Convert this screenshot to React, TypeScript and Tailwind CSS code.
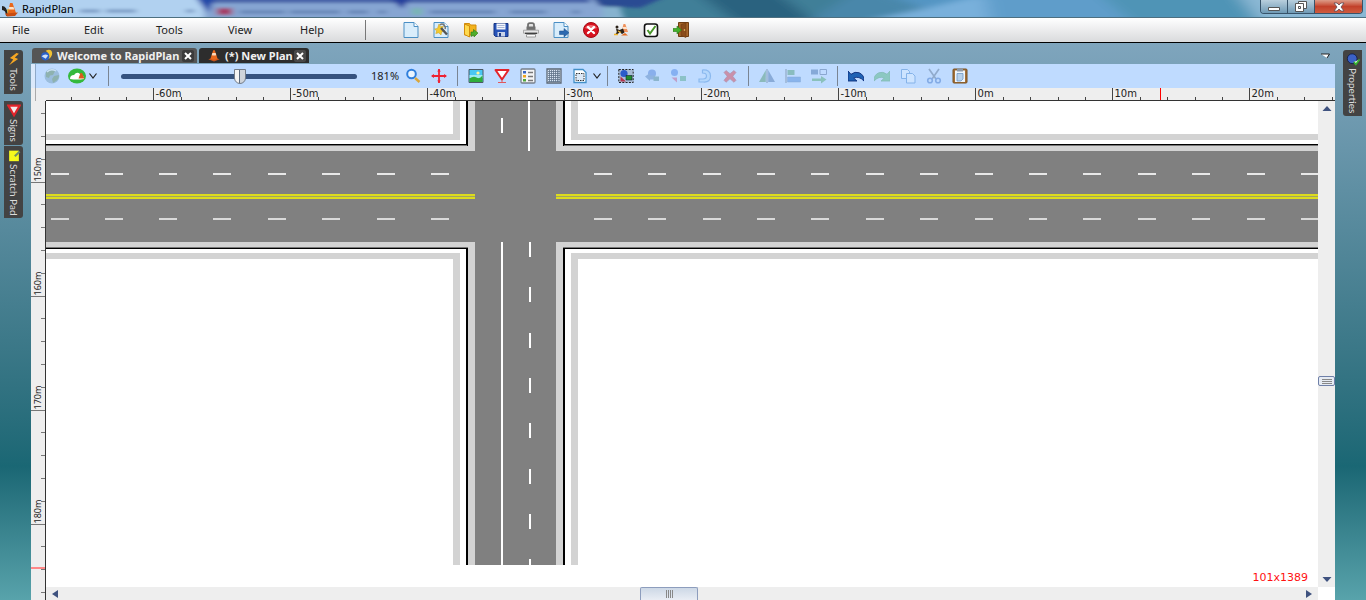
import { useState } from "react";
import type { ReactNode } from "react";

// ---------- small icons ----------

function Icon({ children, className = "h-4 w-4" }: { children: ReactNode; className?: string }) {
  return (
    <svg viewBox="0 0 16 16" className={`${className} shrink-0`} fill="none" aria-hidden="true">
      {children}
    </svg>
  );
}

const cone = (
  <>
    <path d="M1 12.5 8 10.5l7 2L8 15.5z" fill="#c8541a" />
    <path d="M7 1.5h2l3.400 10.600Q8 14.400 3.600 12.100z" fill="#e8671c" />
    <path d="M6 5h4l.8 2.600Q8 8.600 5.200 7.600z" fill="#fbd9bd" />
  </>
);

const newDoc = (
  <>
    <path d="M1 .5h10l4 4v11H1z" fill="#d9edfb" stroke="#4a8fc4" />
    <path d="M11 .5v4h4" fill="#fff" stroke="#4a8fc4" />
  </>
);

const menuIcons: { label: string; art: ReactNode }[] = [
  { label: "New", art: newDoc },
  {
    label: "New from wizard",
    art: (
      <>
        {newDoc}
        <path d="m6 2 1.300 2.800 3-.6-1 2.800 2.400 2-3 .9L8 13l-2.200-2.200-3 .8.8-2.800L1.500 7l3-.6z" fill="#f3c92e" stroke="#c99a1c" strokeWidth=".5" />
        <path d="m8 6 6 6.500" stroke="#555" strokeWidth="2.400" />
        <path d="M7 3q2-2 4 0t1 4" stroke="#777" strokeWidth="1.500" />
      </>
    ),
  },
  {
    label: "Open",
    art: (
      <>
        <path d="M1.500 1.500h5l1 1.500H13v10H1.500z" fill="#f2b21c" stroke="#d28c0c" />
        <path d="m1.500 2 5 2v11l-5-2.500z" fill="#ffd94d" stroke="#d28c0c" />
        <path d="M8 14.500V10h2.500V7.500L15 11l-4 4v-2z" fill="#4fae2d" stroke="#2a7a17" strokeWidth=".6" />
      </>
    ),
  },
  {
    label: "Save",
    art: (
      <>
        <path d="M1 1.500h14v13H2.500L1 13z" fill="#2753b8" stroke="#163583" />
        <path d="M3.500 1.500h9v6h-9z" fill="#f3f6fb" />
        <path d="M4.500 3.500h7M4.500 5.500h7" stroke="#a9b7d6" />
        <path d="M4.500 10h7.500v4.500H4.500z" fill="#c9d3e8" />
        <path d="M6 11h2v3.500H6z" fill="#1d3c86" />
      </>
    ),
  },
  {
    label: "Print",
    art: (
      <>
        <path d="M5 6V3q0-1.800 1.800-1.800h2.400Q11 1.200 11 3v3" fill="#e3e3e3" stroke="#707070" strokeWidth="1.800" />
        <path d="M3.500 4.500h9V8h-9z" fill="#707070" />
        <path d="M.5 8.200h15v3H.5z" fill="#e6e6e6" stroke="#999" strokeWidth=".8" />
        <path d="M2 11.300h12" stroke="#333" strokeWidth="1.200" />
        <path d="M3.500 12.500h9V15h-9z" fill="#fafafa" stroke="#888" strokeWidth=".8" />
      </>
    ),
  },
  {
    label: "Export",
    art: (
      <>
        {newDoc}
        <path d="M6.500 9h4.500V6.500L16 10.700 11 15v-2.500H6.500z" fill="#2c69b0" stroke="#1c4a84" strokeWidth=".5" />
      </>
    ),
  },
  {
    label: "Close plan",
    art: (
      <>
        <circle cx="8" cy="8" r="7.500" fill="#d8121f" stroke="#a30b14" />
        <path d="M2 6a6.500 5 0 0 1 12 0q-6 2.500-12 0" fill="#ee6a70" />
        <path d="m5 5 6 6M11 5l-6 6" stroke="#fff" strokeWidth="2.400" strokeLinecap="round" />
      </>
    ),
  },
  {
    label: "Worksite",
    art: (
      <>
        <path d="M10.500 2h1.800l2.700 8H8.500z" fill="#f0915a" />
        <path d="M9.600 5h3.800l.8 2H9z" fill="#fde2cc" />
        <circle cx="4" cy="5" r="1.500" fill="#2a2118" />
        <path d="M3 6.500 6.500 8 10 6.500l1.500 4L9 12l-2.500-2-2 2.500L2 13l1.800-3z" fill="#2a2118" />
        <path d="M1 12.500h4M5 9l3 1.500" stroke="#f0b429" strokeWidth="1.300" />
        <path d="M8 13.500h7l-3-2.500z" fill="#e56a1e" />
      </>
    ),
  },
  {
    label: "Check plan",
    art: (
      <>
        <rect x="1.500" y="2" width="13" height="12.500" rx="2.500" fill="#fff" stroke="#111" strokeWidth="1.600" />
        <path d="m4.500 8 2.500 3.500L12.500 4" stroke="#49962a" strokeWidth="2" />
      </>
    ),
  },
  {
    label: "Exit",
    art: (
      <>
        <path d="M5.500 .5h10v14h-10z" fill="#a9672b" stroke="#6f3d13" />
        <path d="M8 2.500 13 1v14.500l-5-2z" fill="#8a4c1b" stroke="#6f3d13" strokeWidth=".6" />
        <circle cx="11.500" cy="8" r=".8" fill="#f4cf73" />
        <path d="M0 6.500h4V4l4.500 4L4 12V9.500H0z" fill="#44b02c" stroke="#257b14" strokeWidth=".6" />
      </>
    ),
  },
];

type Tool = { label: string; art: ReactNode; disabled?: boolean };

const viewTools: Tool[] = [
  {
    label: "Background image",
    art: (
      <>
        <path d="M1 1.500h14v13H1z" fill="#49c7f3" stroke="#4c5a66" />
        <path d="M1.500 7h13v3h-13z" fill="#9ceaf3" />
        <path d="M1.500 10.500q4-3 7-1t6-2V14h-13z" fill="#2fae3c" />
        <circle cx="10" cy="5" r="1.600" fill="#fff79a" />
      </>
    ),
  },
  {
    label: "Signs",
    art: (
      <>
        <path d="M1.500 2h13L8 11.500z" fill="#fff" stroke="#e3242b" strokeWidth="2" strokeLinejoin="round" />
        <path d="M8 12v2M4 14.500h8" stroke="#e0575c" />
      </>
    ),
  },
  {
    label: "Legend",
    art: (
      <>
        <rect x="1" y="1" width="14" height="14" rx="1" fill="#f4f5f7" stroke="#77808c" strokeWidth="1.300" />
        <path d="M3 3h3v2.500H3z" fill="#3a66c4" />
        <path d="M3 7h3v2.500H3z" fill="#f0a51e" />
        <path d="M3 11h3v2.500H3z" fill="#4ea53a" />
        <path d="M8 4.500h5M8 8.500h5M8 12.500h5" stroke="#777" strokeWidth="1.300" />
      </>
    ),
  },
  {
    label: "Grid",
    art: (
      <>
        <path d="M1 1h14v14H1z" fill="#dbe7f5" stroke="#5c6875" strokeWidth="1.300" />
        <path d="M3.500 2v12M5.500 2v12M7.500 2v12M9.500 2v12M11.500 2v12M13 2v12M2 3.500h12M2 5.500h12M2 7.500h12M2 9.500h12M2 11.500h12M2 13.500h12" stroke="#5f7389" strokeWidth=".8" />
      </>
    ),
  },
  {
    label: "Print area",
    art: (
      <>
        <path d="M2 1.500h9l3 3v10H2z" fill="#fff" stroke="#4390c8" strokeWidth="1.300" />
        <path d="M4 5.500h8v7H4z" fill="#dce9f7" stroke="#333" strokeDasharray="1.500 1" />
      </>
    ),
  },
];

const editTools: Tool[] = [
  {
    label: "Select",
    art: (
      <>
        <path d="M.8 1.500h14.400v13H.8z" fill="#a9bcd6" stroke="#222" strokeDasharray="2 1.300" />
        <circle cx="6" cy="5.500" r="3.600" fill="#2a5bc9" />
        <path d="M8 7.500h6V12H8z" fill="#218b2d" stroke="#123" strokeWidth=".6" />
        <path d="M2.500 8.500 8 13.500H2.500z" fill="#b3334a" />
      </>
    ),
  },
  { label: "Group", disabled: true, art: <><circle cx="8" cy="5.500" r="4" fill="#3a6ed0" /><path d="M1 8.500 6 5v2.500h5v4H6V13z" fill="#4a7ab5" /><path d="M9.500 8.500h5.500v4.500H9.500z" fill="#3f7f85" /></> },
  { label: "Ungroup", disabled: true, art: <><circle cx="4.500" cy="4.500" r="3.500" fill="#3272e0" /><path d="M10 8h6v5h-6z" fill="#3f9f74" /><path d="M1.500 9.500H7v5z" fill="#c0487a" /></> },
  { label: "Rotate", disabled: true, art: <path d="M6.500 2q8-.5 8 6t-7 6H3v-3h4q3.500 0 3.500-3T6.500 5z" fill="#a5d2f8" stroke="#3c86d6" strokeWidth="1.200" /> },
  { label: "Delete", disabled: true, art: <path d="m4 2.500 4 3.200 4-3.200 2 2L10.800 8.300l3.200 4-2 2-4-3.500-4 3.500-2-2 3.200-4L2 4.500z" fill="#d8222c" stroke="#8e2030" strokeWidth=".6" /> },
];

const arrangeTools: Tool[] = [
  { label: "Mirror", disabled: true, art: <><path d="M6.800 2v12H0z" fill="#3f8a58" /><path d="M9.200 2v12H16z" fill="#3b66a0" /><path d="M8 1v14" stroke="#345" /></> },
  { label: "Align", disabled: true, art: <><path d="M1 1v14" stroke="#345" /><path d="M2.500 2h7v5h-7z" fill="#3a8e62" /><path d="M2.500 9h13v5h-13z" fill="#3a7bd0" stroke="#35629c" strokeWidth=".5" /></> },
  { label: "Distribute", disabled: true, art: <><path d="M0 1.500h7v5H0z" fill="#31609f" /><path d="M9 1.500h6.500v5H9z" stroke="#3c5c8c" /><path d="M1 10.500h9V8l5.500 3.500-5.500 4V13H1z" fill="#3d9c5a" /></> },
];

const clipboardTools: Tool[] = [
  { label: "Undo", art: <path d="M0 3v10h9L5.800 10.200q5-2.700 10.200 2.800.5-6-5-8.300-4-1.500-8 1.600z" fill="#1e62b4" stroke="#0f2f7c" strokeWidth=".9" /> },
  { label: "Redo", disabled: true, art: <path d="M16 3v10H7l3.200-2.800Q5.200 7.500 0 13q-.5-6 5-8.300 4-1.500 8 1.600z" fill="#3fae66" stroke="#2c8a4e" strokeWidth=".8" /> },
  { label: "Copy", disabled: true, art: <><path d="M1.500 1.500h6l2 2v7h-8z" fill="#e4f2ff" stroke="#2f78c9" /><path d="M6.500 5.500h6l2.500 2.500v7H6.500z" fill="#e4f2ff" stroke="#2f78c9" /></> },
  { label: "Cut", disabled: true, art: <><path d="m3 1 7 10M13 1 6 11" stroke="#4d6582" strokeWidth="1.700" /><circle cx="4" cy="12.500" r="2.300" stroke="#2a64c0" strokeWidth="1.600" /><circle cx="12" cy="12.500" r="2.300" stroke="#2a64c0" strokeWidth="1.600" /></> },
  { label: "Paste", art: <><rect x="1" y="1" width="14" height="14" rx="1" fill="#a3703a" stroke="#79501f" /><path d="M3 2.500h10V14H3z" fill="#edf5fd" /><path d="M5 .5h6v3H5z" fill="#8e99a6" /><path d="M5 5.500h6V11l-2 2H5z" fill="#b7d1ec" stroke="#6f98c4" strokeWidth=".8" /></> },
];

function ToolGroup({ tools }: { tools: Tool[] }) {
  return (
    <div className="flex">
      {tools.map((tool) => (
        <button
          key={tool.label}
          type="button"
          title={tool.label}
          aria-label={tool.label}
          disabled={tool.disabled}
          className="flex w-[26px] items-center justify-center disabled:opacity-40"
        >
          <Icon>{tool.art}</Icon>
        </button>
      ))}
    </div>
  );
}

function Chevron() {
  return (
    <svg viewBox="0 0 8 6" className="h-[6px] w-2 shrink-0" fill="none" aria-hidden="true">
      <path d="m.5 .5 3.500 4.500L7.500 .5" stroke="#222" strokeWidth="1.200" />
    </svg>
  );
}

// ---------- title bar and menu ----------

function TitleBar() {
  return (
    <header className="relative flex h-[17px] shrink-0 items-center overflow-hidden bg-[#5495c3]">
      {/* the windows behind, showing through the glass frame */}
      <svg className="absolute inset-0 h-full w-full" preserveAspectRatio="none" viewBox="0 0 1366 17" aria-hidden="true">
        <defs>
          <filter id="glass" x="-5%" y="-50%" width="110%" height="200%">
            <feGaussianBlur stdDeviation="3 1.5" />
          </filter>
          <filter id="haze" x="-5%" y="-50%" width="110%" height="200%">
            <feGaussianBlur stdDeviation="9 2" />
          </filter>
        </defs>
        <g filter="url(#haze)">
          <path d="M580-5h300v30H580z" fill="#3f7f98" />
          <path d="M700-5h80l40 30H740z" fill="#2c627f" />
          <path d="M810 20 850-5h40l60 25z" fill="#4987aa" />
          <path d="M870 20q60-12 110-25l30 25z" fill="#79b0db" />
          <path d="M985-5h150l30 25H990z" fill="#5e9dca" />
          <path d="M1100-5h170v25h-140z" fill="#4f94b6" />
          <path d="M1238-5h150v25h-130z" fill="#8bb8d4" />
        </g>
        <g filter="url(#glass)">
          <path d="M-10-5h215v30H-10z" fill="#b1d1f0" />
          <path d="M204-5h390l30 30H204z" fill="#86a5d2" />
          <path d="M200-5h390v8H200z" fill="#4663a8" />
          <path d="M194-5h22l-8 18z" fill="#2348a8" />
          <path d="M388-5h24l-10 14z" fill="#26409c" />
          <path d="M590-5h80l-30 13-40-2z" fill="#294b93" />
          <path d="M602 7h18l5 14h-22z" fill="#86b2cf" />
          <path d="M217 8h15v7h-15z" fill="#a43c66" />
          <path d="M412 8h10v7h-10z" fill="#79b6b2" />
          <path d="M80 11h20M106 11h30M186 11h8M240 12h45M290 12h50M348 12h20M378 12h8M430 12h65M510 12h36M572 12h8" stroke="#4b6b9d" strokeWidth="3" opacity=".6" />
        </g>
      </svg>
      <Icon className="relative ml-0.5 h-4 w-4">
        <path d="M0 5q5 0 6 9l-2 1Q4 9 0 9z" fill="#222" />
        <path d="M5 8.500Q9 6 9 14l-3 .5z" fill="#d7b321" />
        <path d="M8 2h2.500L14 12q-4 2-8 0z" fill="#e8671c" />
        <path d="M7 6h4.500l.8 2.500H6.500z" fill="#fde0c4" />
        <path d="m3 12.500 13-1-3 3.500-8 .5z" fill="#c74d12" />
      </Icon>
      <h1 className="relative ml-1 text-[11px] leading-4 text-black">RapidPlan</h1>
      <div className="relative mr-[3px] ml-auto flex h-[14px] self-start overflow-hidden rounded-b-[4px] border border-t-0 border-[#37536a]">
        <button type="button" aria-label="Minimize" className="flex w-[27px] items-center justify-center border-r border-[#37536a] bg-linear-to-b from-[#b9cfdd] to-[#6f9ab5]">
          <svg viewBox="0 0 12 4" className="mt-1 h-1 w-3"><path d="M.5 .5h11v3H.5z" fill="#fff" stroke="#555" /></svg>
        </button>
        <button type="button" aria-label="Restore" className="flex w-[27px] items-center justify-center border-r border-[#37536a] bg-linear-to-b from-[#b9cfdd] to-[#6f9ab5]">
          <svg viewBox="0 0 12 11" className="h-[11px] w-3" fill="#fff" stroke="#555">
            <path d="M3.500 .5h8v7h-8z" />
            <path d="M.5 2.500h8v8h-8zM3.500 5.500h2v2h-2z" fillRule="evenodd" />
          </svg>
        </button>
        <button type="button" aria-label="Close" className="flex w-[47px] items-center justify-center bg-linear-to-b from-[#dc9b88] via-[#c2402a] via-50% to-[#cf5c40]">
          <svg viewBox="0 0 12 10" className="h-[10px] w-3"><path d="M1 1h3l2 2 2-2h3L8 5l3 4H8L6 7 4 9H1l3-4z" fill="#fff" stroke="#5b4a55" strokeWidth=".8" /></svg>
        </button>
      </div>
    </header>
  );
}

function MenuBar() {
  return (
    <div className="flex h-[26px] shrink-0 items-center border-t border-b border-t-[#4d6f80] border-b-black bg-linear-to-b from-white to-[#d9dadc]">
      <nav className="flex">
        {["File", "Edit", "Tools", "View", "Help"].map((item) => (
          <button key={item} type="button" className="w-[72px] pl-3 text-left text-[11px] leading-4 text-[#222]">
            {item}
          </button>
        ))}
      </nav>
      <div className="ml-[5px] h-5 w-px bg-[#777]" />
      <div className="ml-[30px] flex">
        {menuIcons.map((icon) => (
          <button key={icon.label} type="button" title={icon.label} aria-label={icon.label} className="flex w-[30px] items-center justify-center">
            <Icon>{icon.art}</Icon>
          </button>
        ))}
      </div>
    </div>
  );
}

// ---------- side tabs ----------

function SideTab({ label, side = "left", children }: { label: string; side?: "left" | "right"; children: ReactNode }) {
  return (
    <button
      type="button"
      className={`flex w-[19px] flex-col items-center gap-0.5 bg-[#434343] py-[3px] ${side === "left" ? "rounded-r-[3px]" : "rounded-l-[3px]"}`}
    >
      <Icon className="h-[13px] w-[14px]">{children}</Icon>
      <span className="font-['Lato','Noto_Sans',sans-serif] text-[10px] leading-[15px] text-[#dcdcdc] [writing-mode:vertical-rl]">
        {label}
      </span>
    </button>
  );
}

// ---------- rulers ----------

const METRES_X = [-70, -60, -50, -40, -30, -20, -10, 0, 10, 20];
const METRES_Y = [140, 150, 160, 170, 180];
const STEP_X = 137;
const STEP_Y = 114;
const minors = [1, 2, 3, 4];

function HorizontalRuler() {
  return (
    <svg className="h-[13px] w-full shrink-0 bg-[#eeeeee]" aria-label="Horizontal ruler" shapeRendering="crispEdges">
      <path d="M4.500 0v13" stroke="#aaa" />
      {METRES_X.map((m, i) => {
        const x = i * STEP_X - 14.5;
        return (
          <g key={m}>
            {x > 0 && <path d={`M${x} 0v13`} stroke="#444" />}
            {minors.map((n) => {
              const tick = Math.round(x + (n * STEP_X) / 5) + 0.5;
              return tick > 15 && <path key={n} d={`M${tick} 9v4`} stroke="#444" />;
            })}
            {x > 0 && (
              <text x={x + 2} y="9" fontSize="10" fill="#222" className="font-['DejaVu_Sans',sans-serif]">
                {m}m
              </text>
            )}
          </g>
        );
      })}
      <path d="M1129.500 0v13" stroke="#f00" />
      <path d="M15 12.500h1289" stroke="#333" />
    </svg>
  );
}

function VerticalRuler() {
  return (
    <svg className="h-full w-[15px] shrink-0 bg-[#eeeeee]" aria-label="Vertical ruler" shapeRendering="crispEdges">
      {METRES_Y.map((m, i) => {
        const y = i * STEP_Y - 32.5;
        return (
          <g key={m}>
            {y > 0 && <path d={`M0 ${y}h15`} stroke="#777" />}
            {minors.map((n) => {
              const tick = Math.round(y + (n * STEP_Y) / 5) - 0.5;
              return tick > 3 && <path key={n} d={`M10 ${tick}h5`} stroke="#777" />;
            })}
            {y > 0 && (
              <text transform={`translate(10 ${y - 1}) rotate(-90)`} fontSize="9" fill="#222">
                {m}m
              </text>
            )}
          </g>
        );
      })}
      <path d="M0 467h15" stroke="#f88" strokeWidth="2" />
      <path d="M14.500 0v600" stroke="#333" />
    </svg>
  );
}

// ---------- the plan ----------

const WEST_DASHES = [5, 59, 113, 167, 222, 276, 331, 385];
const EAST_DASHES = [548, 602, 657, 711, 765, 820, 874, 929, 983, 1037, 1092, 1146, 1201, 1255];
const SOUTH_DASHES = [141, 186, 232, 277, 322, 368, 413];

function Plan() {
  return (
    <svg className="h-full w-full bg-white" role="img" aria-label="Intersection plan" shapeRendering="crispEdges">
      {/* footpaths */}
      <g fill="none" stroke="#d3d3d3" strokeWidth="6">
        <path d="M0 35.500H410.500" />
        <path d="M410.500 38.500V0M528.500 38.500V0" strokeWidth="7" />
        <path d="M525 35.500H1400M0 155H407M532 155H1400" />
        <path d="M410.500 152V464M528.500 152V464" strokeWidth="7" />
      </g>
      {/* kerbs */}
      <g fill="#d3d3d3">
        <path d="M422 0h95v464h-95z" />
        <path d="M0 45h1400v101H0z" />
      </g>
      <g fill="none" stroke="#777" strokeWidth="2">
        <path d="M0 44H421V0" />
        <path d="M1400 44H518V0" />
        <path d="M0 147H421V464" />
        <path d="M1400 147H518V464" />
      </g>
      <g fill="none" stroke="#000">
        <path d="M0 43.500H420.500V0M421.500 45V0" />
        <path d="M1400 43.500H518.500V0M517.500 45V0" />
        <path d="M0 147.500H420.500V464M421.500 147V464" />
        <path d="M1400 147.500H518.500V464M517.500 147V464" />
      </g>
      {/* road surface */}
      <path d="M429 0h81v464h-81z" fill="#808080" />
      <path d="M0 50h1400v91H0z" fill="#808080" />
      {/* centre lines */}
      <path d="M0 93h429v5H0zM510 93h890v5H510z" fill="#a3a360" />
      <path d="M0 93h429v2H0zM0 96h429v2H0zM510 93h890v2H510zM510 96h890v2H510z" fill="#dcdc1e" />
      {/* lane markings */}
      {[...WEST_DASHES, ...EAST_DASHES].map((x) => (
        <g key={x}>
          <path d={`M${x} 72h18v2h-18z`} fill="#e8e8e8" />
          <path d={`M${x} 117h18v2h-18z`} fill="#d9d9d9" />
        </g>
      ))}
      <g fill="#fff">
        <path d="M455 17h2v15h-2zM482 0h2v50h-2zM455 141h2v323h-2z" />
        {SOUTH_DASHES.map((y) => (
          <path key={y} d={`M483 ${y}h2v15h-2z`} />
        ))}
        <path d="M483 458h2v6h-2z" />
      </g>
    </svg>
  );
}

function Arrow({ d, label }: { d: string; label: string }) {
  return (
    <button type="button" aria-label={label} className="flex items-center justify-center">
      <svg viewBox="0 0 10 10" className="h-[10px] w-[10px]"><path d={d} fill="#3f527f" /></svg>
    </button>
  );
}

function App() {
  // zoom level of the plan in percent
  const [zoom, setZoom] = useState(181);

  return (
    <div className="flex h-screen flex-col overflow-hidden bg-white font-['Noto_Sans','Open_Sans',sans-serif]">
      <TitleBar />
      <MenuBar />

      <div className="flex min-h-0 flex-1 bg-linear-to-b from-[#7fa5bd] via-[#1a6774] via-[76%] to-[#58a3ab]">
        {/* left panel tabs */}
        <aside className="flex w-[31px] shrink-0 flex-col items-start pt-[7px] pl-1">
          <div className="mb-[7px] flex flex-col">
            <SideTab label="Tools">
              <path d="M11 0 3 6l4 2-5 7 11-7.500-4-2L14 1z" fill="#f5a623" />
            </SideTab>
          </div>
          <div className="flex flex-col gap-[1px]">
            <SideTab label="Signs">
              <path d="M1 2h14L8 14z" fill="#f4eaea" stroke="#e3242b" strokeWidth="2.500" />
            </SideTab>
            <SideTab label="Scratch Pad">
              <path d="M2 2h12v13H2z" fill="#f6fb1d" />
              <path d="m9 9 6-6" stroke="#6f8f6a" strokeWidth="2.500" />
            </SideTab>
          </div>
        </aside>

        <main className="flex min-w-0 flex-1 flex-col">
          {/* document tabs */}
          <div className="flex h-[21px] shrink-0 items-center gap-[2px] pt-1 pl-px">
            <div className="flex h-[15px] w-[165px] items-center rounded-t-[3px] bg-[#555555] pl-[7px]">
              <Icon className="h-[13px] w-[15px]">
                <path d="M7 2q7-3 8 3 0 6-6 8 5-6-2-11" fill="#f1c232" />
                <circle cx="6.500" cy="9" r="5" fill="#2b62c9" />
                <path d="M2 9q4-4 8-1l-3 4z" fill="#cfe0f8" />
              </Icon>
              <button type="button" className="ml-[3px] text-[11px] leading-[15px] font-bold whitespace-nowrap text-[#f0f0f0]">Welcome to RapidPlan</button>
              <button type="button" aria-label="Close Welcome to RapidPlan" className="mr-[3px] ml-auto rounded-xs bg-[#3b3b3b] p-0.5">
                <svg viewBox="0 0 8 8" className="h-2 w-2"><path d="m1 1 6 6M7 1 1 7" stroke="#fff" strokeWidth="2" /></svg>
              </button>
            </div>
            <div className="flex h-[15px] w-[110px] items-center rounded-t-[3px] bg-[#2d2d2d] pl-2">
              <Icon className="h-[13px] w-[14px]">{cone}</Icon>
              <button type="button" className="ml-1 text-[11px] leading-[15px] font-bold whitespace-nowrap text-[#f0f0f0]">(*) New Plan</button>
              <button type="button" aria-label="Close New Plan" className="mr-[3px] ml-auto rounded-xs bg-[#484848] p-0.5">
                <svg viewBox="0 0 8 8" className="h-2 w-2"><path d="m1 1 6 6M7 1 1 7" stroke="#fff" strokeWidth="2" /></svg>
              </button>
            </div>
            <button type="button" aria-label="Tab list" className="mr-[5px] ml-auto">
              <svg viewBox="0 0 10 6" className="h-[6px] w-[10px]">
                <path d="M1 1h8L7 5z" fill="#fff" />
                <path d="M1 1h8.500L7 5" fill="none" stroke="#222" />
              </svg>
            </button>
          </div>

          {/* toolbar */}
          <div className="flex h-6 shrink-0 items-center bg-[#bfdbff]">
            <div className="h-full w-[5px] border-r border-[#8fa9c8] bg-[#dbe9fb]" />
            <button type="button" aria-label="Online map" disabled className="ml-2 opacity-75">
              <Icon>
                <circle cx="8" cy="8" r="7.500" fill="#8fb4d2" />
                <path d="M2 4q3-3 6-3l3 2-2 4-3 .5-1 2.500-3-1zM10 8l5-1q0 4-3 6l-3 2-1-4z" fill="#7ea595" />
                <path d="M3 4q4-4 9-1" stroke="#cfe3f2" strokeWidth="1.300" />
              </Icon>
            </button>
            <button type="button" aria-label="Sign library" className="ml-2 flex items-center gap-[3px]">
              <svg viewBox="0 0 18 16" className="h-4 w-[18px]" aria-hidden="true">
                <ellipse cx="9" cy="8" rx="9" ry="7.500" fill="#34b93c" />
                <path d="M2 11q0-4 4-4 3-4 6-1 4 1 4 5-7 1-14 0" fill="#fff" />
                <path d="M12.500 5h1.500l2.500 5.500h-6z" fill="#dc5a1c" />
              </svg>
              <Chevron />
            </button>
            <div className="ml-[11px] h-5 w-px bg-[#7a8593]" />
            <input
              type="range"
              aria-label="Zoom"
              min={10}
              max={350}
              value={zoom}
              onChange={(e) => setZoom(Number(e.target.value))}
              className="ml-3 h-4 w-[236px] appearance-none bg-transparent [&::-webkit-slider-runnable-track]:h-[5px] [&::-webkit-slider-runnable-track]:rounded-full [&::-webkit-slider-runnable-track]:bg-[#35527f] [&::-webkit-slider-thumb]:-mt-[5px] [&::-webkit-slider-thumb]:h-[15px] [&::-webkit-slider-thumb]:w-3 [&::-webkit-slider-thumb]:appearance-none [&::-webkit-slider-thumb]:rounded-b-[6px] [&::-webkit-slider-thumb]:border [&::-webkit-slider-thumb]:border-[#737c88] [&::-webkit-slider-thumb]:bg-[linear-gradient(90deg,#f4f4f4_45%,#5b6b80_45%,#5b6b80_55%,#cfd4da_55%)]"
            />
            <span className="ml-[14px] w-[29px] text-[11px] leading-4 text-[#222]">{zoom}%</span>
            <div className="flex">
              <button type="button" aria-label="Zoom to fit" className="flex w-[26px] items-center justify-center">
                <Icon>
                  <circle cx="6.500" cy="6" r="4.300" fill="#eaf5ff" stroke="#2f7fdc" strokeWidth="2" />
                  <path d="m10 10 4.500 4" stroke="#d9a63c" strokeWidth="2.500" />
                </Icon>
              </button>
              <button type="button" aria-label="Centre" className="flex w-[26px] items-center justify-center">
                <Icon>
                  <path d="M8 1v14M1 8h14" stroke="#ee2233" strokeWidth="1.800" />
                  <path d="m8 1 1.800 2.500H6.200zM8 15l1.800-2.500H6.200zM0 8l3-2v4zM16 8l-3-2v4z" fill="#ee2233" />
                </Icon>
              </button>
            </div>
            <div className="ml-[5px] h-5 w-px bg-[#7a8593]" />
            <div className="ml-[5px] flex items-center">
              <ToolGroup tools={viewTools} />
              <button type="button" aria-label="Print area options"><Chevron /></button>
            </div>
            <div className="ml-[6px] h-5 w-px bg-[#7a8593]" />
            <div className="ml-[5px]"><ToolGroup tools={editTools} /></div>
            <div className="ml-[5px] h-5 w-px bg-[#7a8593]" />
            <div className="ml-[5px]"><ToolGroup tools={arrangeTools} /></div>
            <div className="ml-[5px] h-5 w-px bg-[#7a8593]" />
            <div className="ml-[5px]"><ToolGroup tools={clipboardTools} /></div>
          </div>

          <HorizontalRuler />

          {/* canvas with its scroll bars */}
          <div className="flex min-h-0 flex-1">
            <VerticalRuler />
            <div className="flex min-w-0 flex-1 flex-col">
              <div className="flex min-h-0 flex-1">
                <div className="relative min-w-0 flex-1 overflow-hidden">
                  <Plan />
                  <span className="absolute right-[10px] bottom-[1px] font-['DejaVu_Sans',sans-serif] text-[11px] leading-4 text-[#ff1111]">101x1389</span>
                </div>
                <div className="flex w-[17px] shrink-0 flex-col justify-between bg-[#eeeeee] py-[3px]">
                  <Arrow label="Scroll up" d="M5 2l4.500 5h-9z" />
                  <div className="mt-[74px] flex h-[10px] flex-col items-center justify-center gap-px rounded-xs border border-[#6f80a8] bg-[#e6ebf3]">
                    <i className="h-px w-[10px] bg-[#888]" />
                    <i className="h-px w-[10px] bg-[#888]" />
                    <i className="h-px w-[10px] bg-[#888]" />
                  </div>
                  <Arrow label="Scroll down" d="M.5 3h9L5 8z" />
                </div>
              </div>
              <div className="flex h-[13px] shrink-0 bg-white pr-[17px]">
                <div className="flex flex-1 items-center justify-between bg-[#eeeeee] px-1">
                  <Arrow label="Scroll left" d="M2 5l6-4v8z" />
                  <div className="mr-[26px] flex h-[13px] w-[58px] items-center justify-center gap-px rounded-t-xs border border-b-0 border-[#8d9dbd] bg-linear-to-b from-[#cdd8e6] to-[#e9edf4]">
                    <i className="h-2 w-px bg-[#888]" />
                    <i className="h-2 w-px bg-[#888]" />
                    <i className="h-2 w-px bg-[#888]" />
                    <i className="h-2 w-px bg-[#888]" />
                  </div>
                  <Arrow label="Scroll right" d="M8 5 2 1v8z" />
                </div>
              </div>
            </div>
          </div>
        </main>

        {/* right panel tabs */}
        <aside className="flex w-[31px] shrink-0 flex-col items-end pt-[7px] pr-1">
          <SideTab label="Properties" side="right">
            <circle cx="7" cy="7" r="6" fill="#3b61c6" stroke="#101a3c" />
            <path d="m9 11 2.500 3L16 8" fill="#dff5dc" stroke="#35b22e" strokeWidth="2" />
          </SideTab>
        </aside>
      </div>
    </div>
  );
}

export default App;
